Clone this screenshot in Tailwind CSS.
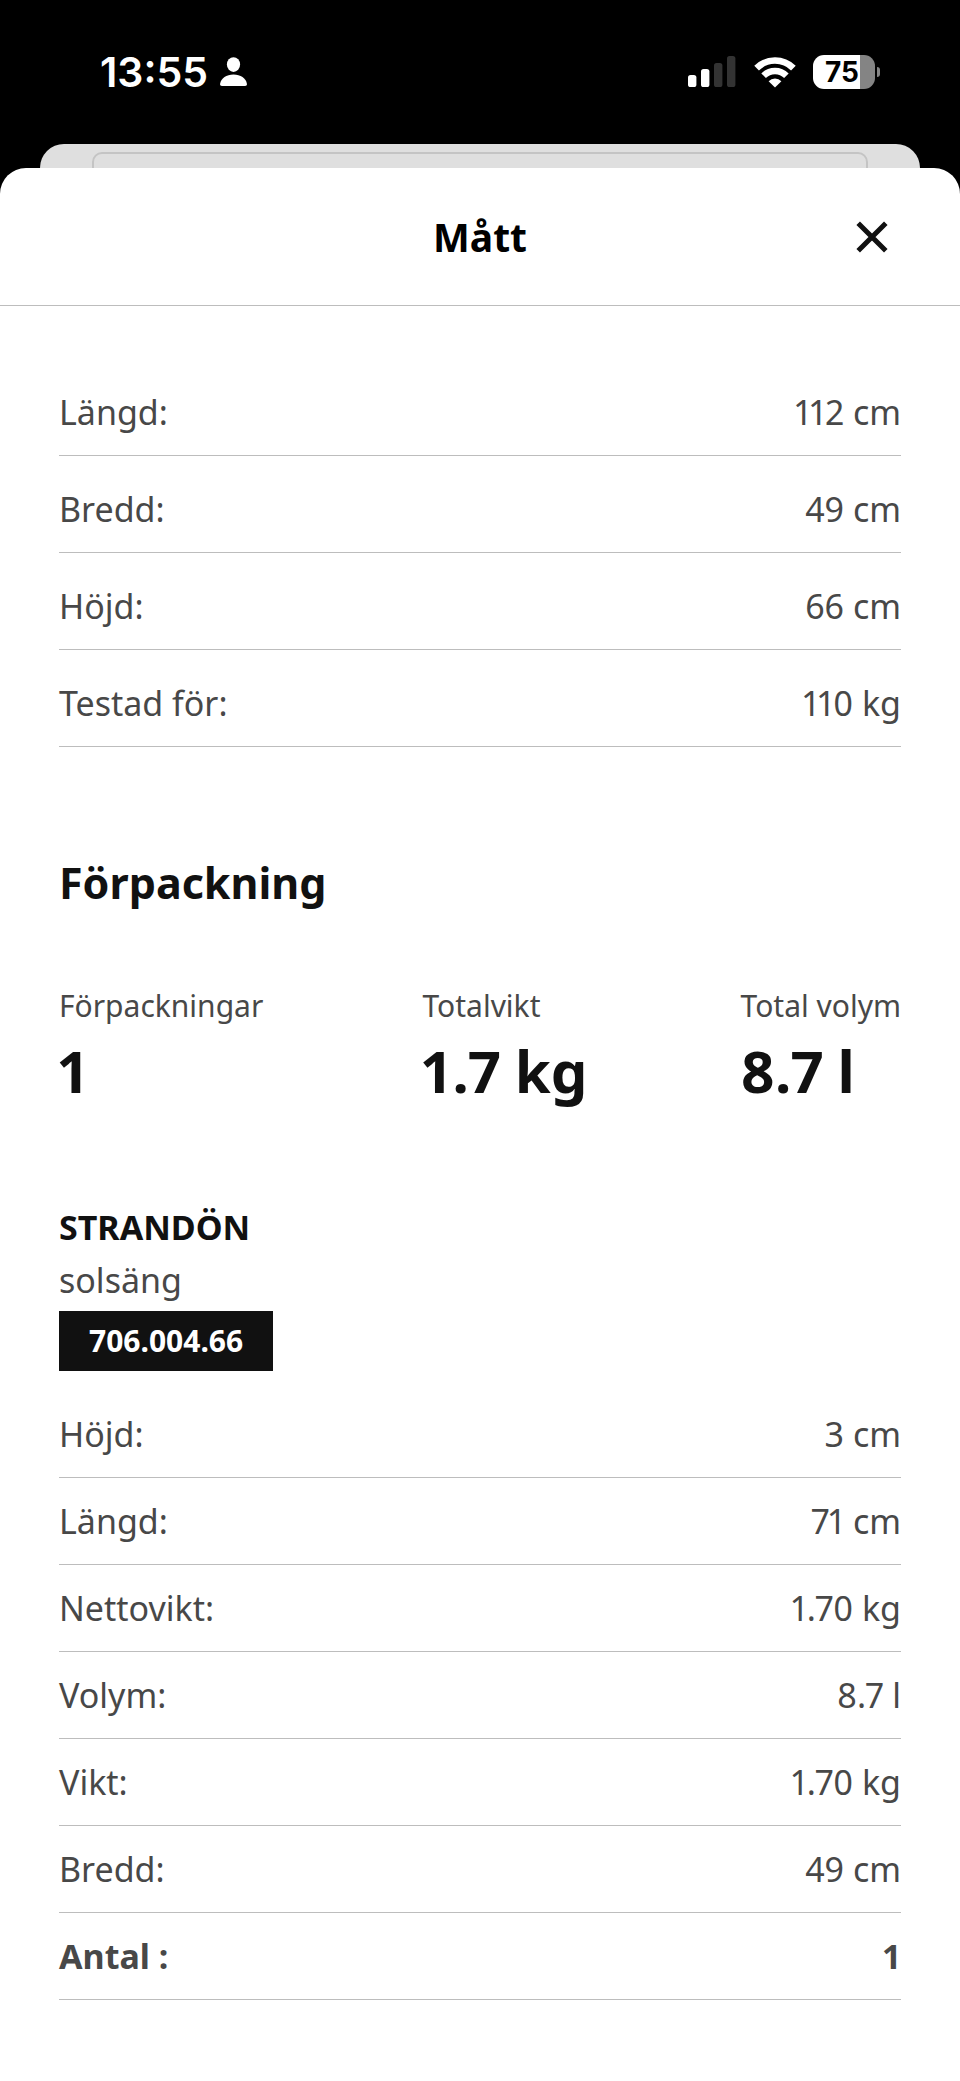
<!DOCTYPE html>
<html lang="sv">
<head>
  <meta charset="UTF-8" />
  <meta name="viewport" content="width=device-width, initial-scale=1.0"/>
  <title>Mått</title>
  <script src="https://cdn.jsdelivr.net/npm/@tailwindcss/browser@4"></script>
</head>
<body class="flex min-h-screen flex-col bg-black font-['Noto_Sans',sans-serif] text-[#484848]">
  <!-- Status bar -->
  <div class="flex h-36 items-center justify-between pl-[100px] pr-20 font-['Inter',sans-serif] text-white">
    <div class="flex items-center gap-3">
      <span class="text-[41px] leading-none font-semibold">13:55</span>
      <svg class="h-[30px] w-7" viewBox="0 0 28 30" fill="currentColor" aria-hidden="true">
        <ellipse cx="13.500" cy="7.600" rx="6.600" ry="7.400"/>
        <path d="M2 29C.5 29-.1 28.200.1 26.800.9 21.300 6.500 17.500 13.500 17.500s12.600 3.800 13.400 9.300c.2 1.400-.4 2.200-1.900 2.200z"/>
      </svg>
    </div>
    <div class="flex items-center">
      <svg class="mr-[18px] h-8 w-12" viewBox="0 0 48 32" aria-hidden="true">
        <rect x="0" y="19" width="8.400" height="12" rx="2.600" fill="#fff"/>
        <rect x="13" y="13" width="8.400" height="18" rx="2.600" fill="#fff"/>
        <rect x="26" y="7" width="8.400" height="24" rx="2.600" fill="#333"/>
        <rect x="39" y="0" width="8.400" height="31" rx="2.600" fill="#333"/>
      </svg>
      <svg class="mr-[17px] h-[31px] w-[42px]" viewBox="0 0 42 31" fill="none" stroke="#fff" aria-hidden="true">
        <path d="M2.600 11.200a26 26 0 0 1 36.800 0" stroke-width="6.600"/>
        <path d="M9.600 18.700a16 16 0 0 1 22.800 0" stroke-width="6.400"/>
        <path d="M21 30.500l-6.400-6.300a9 9 0 0 1 12.800 0z" fill="#fff" stroke="none"/>
      </svg>
      <div class="flex items-center gap-0.5">
        <div class="flex h-[34px] w-[62px] items-center justify-center rounded-[11px] bg-linear-to-r from-white from-75% to-[#848484] to-75% pr-1 text-[28px] leading-none font-bold text-black">75</div>
        <div class="h-2.5 w-[3px] rounded-r-full bg-[#848484]"></div>
      </div>
    </div>
  </div>

  <!-- Page behind the sheet -->
  <div class="mx-10 h-6 overflow-hidden rounded-t-[24px] bg-[#dfdfdf] px-[52px] pt-2">
    <div class="h-10 rounded-[10px] border-2 border-[#c4c4c4]"></div>
  </div>

  <!-- Sheet -->
  <div class="grow rounded-t-[26px] bg-white">
    <header class="grid h-[138px] grid-cols-[1fr_auto_1fr] items-center border-b border-[#bdbdbd] px-16">
      <h1 class="col-start-2 text-[39px] leading-[54px] font-bold text-black">Mått</h1>
      <button type="button" aria-label="Stäng" class="flex size-12 items-center justify-center justify-self-end text-[#111]">
        <svg class="size-8" viewBox="0 0 32 32" fill="none" stroke="currentColor" stroke-width="5" aria-hidden="true">
          <path d="M2.200 2.200l27.600 27.600M29.800 2.200L2.200 29.800"/>
        </svg>
      </button>
    </header>

    <main class="px-[59px] pt-[53px] pb-20">
      <table class="w-full text-[34px] leading-[46px] proportional-nums">
        <tbody>
          <tr class="border-b border-[#bdbdbd]"><th scope="row" class="pt-[30px] pb-5 text-left font-normal">Längd:</th><td class="pt-[30px] pb-5 text-right">112 cm</td></tr>
          <tr class="border-b border-[#bdbdbd]"><th scope="row" class="pt-[30px] pb-5 text-left font-normal">Bredd:</th><td class="pt-[30px] pb-5 text-right">49 cm</td></tr>
          <tr class="border-b border-[#bdbdbd]"><th scope="row" class="pt-[30px] pb-5 text-left font-normal">Höjd:</th><td class="pt-[30px] pb-5 text-right">66 cm</td></tr>
          <tr class="border-b border-[#bdbdbd]"><th scope="row" class="pt-[30px] pb-5 text-left font-normal">Testad för:</th><td class="pt-[30px] pb-5 text-right">110 kg</td></tr>
        </tbody>
      </table>

      <h2 class="mt-[106px] text-[43px] leading-[60px] font-bold text-[#111]">Förpackning</h2>

      <dl class="mt-[73px] grid grid-cols-[8fr_7fr_auto] proportional-nums">
        <div>
          <dt class="text-[30px] leading-10">Förpackningar</dt>
          <dd class="mt-[5px] text-[58px] leading-20 font-bold text-[#111]">1</dd>
        </div>
        <div>
          <dt class="text-[30px] leading-10">Totalvikt</dt>
          <dd class="mt-[5px] text-[58px] leading-20 font-bold text-[#111]">1.7 kg</dd>
        </div>
        <div>
          <dt class="text-[30px] leading-10">Total volym</dt>
          <dd class="mt-[5px] text-[58px] leading-20 font-bold text-[#111]">8.7 l</dd>
        </div>
      </dl>

      <h3 class="mt-[93px] text-[34px] leading-[46px] font-bold text-[#111]">STRANDÖN</h3>
      <p class="mt-[7px] text-[34px] leading-[46px]">solsäng</p>
      <div class="mt-2 flex h-[60px] w-fit items-center bg-[#111] px-[30px] text-[30px] leading-10 font-bold text-white">706.004.66</div>

      <table class="mt-5 w-full text-[34px] leading-[46px] proportional-nums">
        <tbody>
          <tr class="border-b border-[#bdbdbd]"><th scope="row" class="py-5 text-left font-normal">Höjd:</th><td class="py-5 text-right">3 cm</td></tr>
          <tr class="border-b border-[#bdbdbd]"><th scope="row" class="py-5 text-left font-normal">Längd:</th><td class="py-5 text-right">71 cm</td></tr>
          <tr class="border-b border-[#bdbdbd]"><th scope="row" class="py-5 text-left font-normal">Nettovikt:</th><td class="py-5 text-right">1.70 kg</td></tr>
          <tr class="border-b border-[#bdbdbd]"><th scope="row" class="py-5 text-left font-normal">Volym:</th><td class="py-5 text-right">8.7 l</td></tr>
          <tr class="border-b border-[#bdbdbd]"><th scope="row" class="py-5 text-left font-normal">Vikt:</th><td class="py-5 text-right">1.70 kg</td></tr>
          <tr class="border-b border-[#bdbdbd]"><th scope="row" class="py-5 text-left font-normal">Bredd:</th><td class="py-5 text-right">49 cm</td></tr>
          <tr class="border-b border-[#bdbdbd] font-bold"><th scope="row" class="py-5 text-left">Antal :</th><td class="py-5 text-right">1</td></tr>
        </tbody>
      </table>
    </main>
  </div>
</body>
</html>
